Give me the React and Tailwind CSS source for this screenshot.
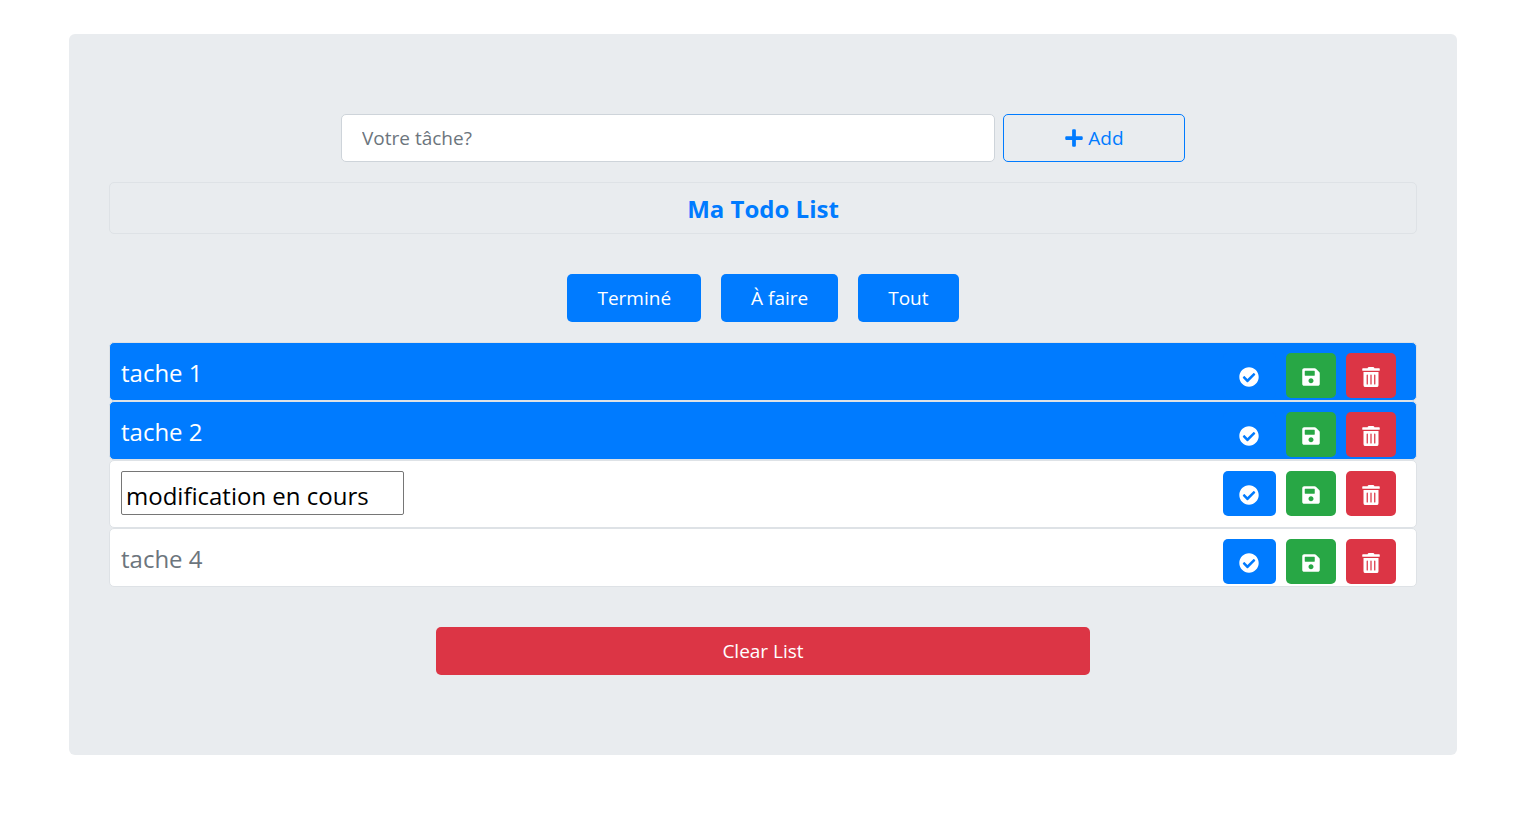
import { useState } from "react";
import { FaCheckCircle, FaPlus, FaSave, FaTrashAlt } from "react-icons/fa";

const initialTasks = [
  { id: 1, title: "tache 1", done: true },
  { id: 2, title: "tache 2", done: true },
  { id: 3, title: "modification en cours", done: false, editing: true },
  { id: 4, title: "tache 4", done: false },
];

const filters = [
  { label: "Terminé", test: (task) => task.done },
  { label: "À faire", test: (task) => !task.done },
  { label: "Tout", test: () => true },
];

function IconButton({ label, className, onClick, children }) {
  return (
    <button
      type="button"
      aria-label={label}
      onClick={onClick}
      className={`flex h-[45px] items-center justify-center rounded-[5px] pt-[3px] pr-px text-xl text-white ${className}`}
    >
      {children}
    </button>
  );
}

function TaskRow({ task, onToggle, onEdit, onRename, onDelete }) {
  const tone = task.done ? "bg-[#007bff] text-white" : "bg-white text-[#6c757d]";
  const height = task.editing ? "h-[68px]" : "h-[59px]";
  return (
    <li
      className={`flex items-start justify-between rounded-[5px] border border-[#dee2e6] pt-2.5 pr-5 pl-[11px] text-2xl ${tone} ${height}`}
    >
      {task.editing ? (
        <input
          aria-label="Modifier la tâche"
          value={task.title}
          onChange={(event) => onRename(event.target.value)}
          className="h-11 w-[283px] rounded-xs border border-[#767676] bg-white px-1 pt-1 text-black"
        />
      ) : (
        <span className="leading-10">{task.title}</span>
      )}
      <div className="flex gap-2.5">
        <IconButton label="Terminer" onClick={onToggle} className="w-[53px] bg-[#007bff]">
          <FaCheckCircle />
        </IconButton>
        <IconButton label="Enregistrer" onClick={onEdit} className="w-[50px] bg-[#28a745]">
          <FaSave />
        </IconButton>
        <IconButton label="Supprimer" onClick={onDelete} className="w-[50px] bg-[#dc3545]">
          <FaTrashAlt />
        </IconButton>
      </div>
    </li>
  );
}

export default function App() {
  const [tasks, setTasks] = useState(initialTasks);
  const [draft, setDraft] = useState("");
  const [filter, setFilter] = useState(filters[2]);

  const update = (id, change) =>
    setTasks(tasks.map((task) => (task.id === id ? { ...task, ...change } : task)));

  const addTask = (event) => {
    event.preventDefault();
    if (!draft.trim()) return;
    setTasks([...tasks, { id: Date.now(), title: draft.trim(), done: false }]);
    setDraft("");
  };

  return (
    <div className="min-h-screen bg-white pt-[34px] pr-20 pb-8 pl-[69px] font-['Open_Sans',sans-serif] text-[19px]">
      <main className="rounded-md bg-[#e9ecef] px-10 py-20">
        <form onSubmit={addTask} className="flex justify-center gap-2">
          <input
            aria-label="Votre tâche"
            placeholder="Votre tâche?"
            value={draft}
            onChange={(event) => setDraft(event.target.value)}
            className="h-12 w-1/2 rounded-[5px] border border-[#ced4da] bg-white px-5 text-[#495057] placeholder:text-[#6c757d]"
          />
          <button
            type="submit"
            className="flex h-12 w-[182px] items-center justify-center gap-1 rounded-[5px] border border-[#007bff] text-[#007bff]"
          >
            <FaPlus className="text-xl" />
            Add
          </button>
        </form>

        <h1 className="mt-5 flex h-[52px] items-center justify-center rounded-[5px] border border-[#dee2e6] pt-0.5 text-2xl font-bold text-[#007bff]">
          Ma Todo List
        </h1>

        <div className="mt-10 flex justify-center gap-5">
          {filters.map((item) => (
            <button
              key={item.label}
              type="button"
              onClick={() => setFilter(item)}
              className="h-12 rounded-[5px] bg-[#007bff] px-[30px] text-white"
            >
              {item.label}
            </button>
          ))}
        </div>

        <ul className="mt-5">
          {tasks.filter(filter.test).map((task) => (
            <TaskRow
              key={task.id}
              task={task}
              onToggle={() => update(task.id, { done: !task.done })}
              onEdit={() => update(task.id, { editing: !task.editing })}
              onRename={(title) => update(task.id, { title })}
              onDelete={() => setTasks(tasks.filter((other) => other.id !== task.id))}
            />
          ))}
        </ul>

        <button
          type="button"
          onClick={() => setTasks([])}
          className="mx-auto mt-10 block h-12 w-1/2 rounded-[5px] bg-[#dc3545] text-white"
        >
          Clear List
        </button>
      </main>
    </div>
  );
}
